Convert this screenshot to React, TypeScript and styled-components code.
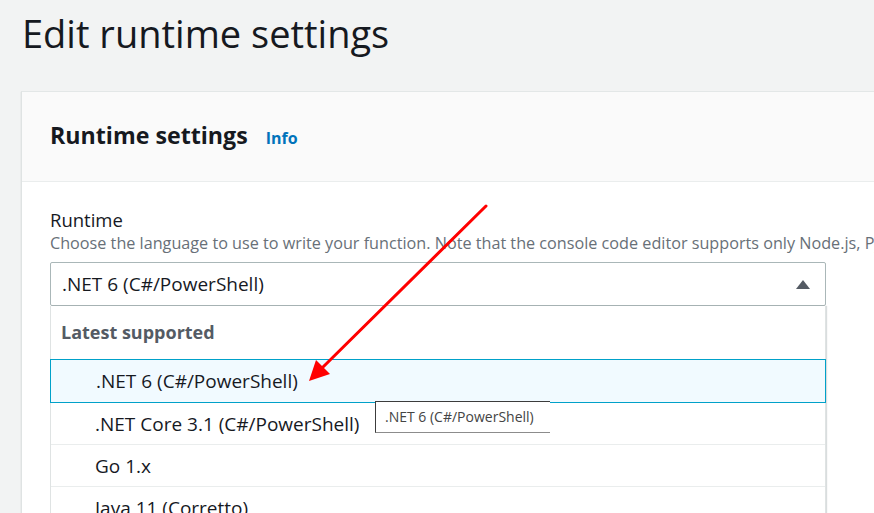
import styled, { createGlobalStyle } from "styled-components";

const GlobalStyle = createGlobalStyle`
  html, body {
    margin: 0;
    padding: 0;
    background: #f2f3f3;
    overflow: hidden;
  }
  body {
    font-family: "Open Sans", "Noto Sans", "Liberation Sans", sans-serif;
    color: #16191f;
  }
`;

const Page = styled.div`
  position: relative;
  width: 874px;
  height: 513px;
  overflow: hidden;
  padding-left: 21px;
  box-sizing: border-box;
`;

const PageTitle = styled.h1`
  margin: 0;
  padding: 10px 0 0 1px;
  height: 91px;
  box-sizing: border-box;
  font-size: 38px;
  font-weight: 400;
  line-height: 46px;
  color: #16191f;
`;

const Card = styled.section`
  width: 900px;
  background: #ffffff;
  border-left: 1px solid #dfe3e3;
  border-top: 1px solid #e3e7e7;
  box-shadow: 0 1px 1px 0 rgba(0, 28, 36, 0.2);
`;

const CardHeader = styled.header`
  display: flex;
  align-items: baseline;
  gap: 18px;
  height: 90px;
  box-sizing: border-box;
  padding: 27px 0 0 28px;
  background: #fafafa;
  border-bottom: 1px solid #eaeded;
`;

const CardTitle = styled.h2`
  margin: 0;
  font-size: 23.2px;
  font-weight: 700;
  line-height: 32px;
  color: #16191f;
`;

const InfoLink = styled.a`
  font-size: 16px;
  font-weight: 700;
  color: #0073bb;
  text-decoration: none;
`;

const CardBody = styled.div`
  padding: 26px 0 0 28px;
`;

const FieldLabel = styled.div`
  font-size: 18.5px;
  line-height: 24px;
  color: #16191f;
`;

const FieldHint = styled.div`
  font-size: 16.2px;
  line-height: 22px;
  color: #687078;
  white-space: nowrap;
  margin-bottom: 8px;
`;

const SelectBox = styled.div`
  width: 776px;
  height: 44px;
  box-sizing: border-box;
  display: flex;
  align-items: center;
  justify-content: space-between;
  padding: 0 15px 0 11px;
  border: 1px solid #aab7b8;
  border-radius: 2px;
  background: #fff;
  font-size: 19px;
  color: #16191f;
`;

const Caret = styled.span`
  width: 0;
  height: 0;
  border-left: 7px solid transparent;
  border-right: 7px solid transparent;
  border-bottom: 9px solid #545b64;
`;

const Dropdown = styled.div`
  width: 776px;
  box-sizing: border-box;
  border: 1px solid #dfe3e3;
  border-top: none;
  background: #fff;
  box-shadow: 1px 0 1px rgba(0, 28, 36, 0.15);
`;

const GroupHeader = styled.div`
  height: 53px;
  box-sizing: border-box;
  padding: 14px 0 0 10px;
  font-size: 18px;
  font-weight: 700;
  color: #545b64;
`;

const Option = styled.div<{ $active?: boolean }>`
  height: ${(p) => (p.$active ? 44 : 42)}px;
  box-sizing: border-box;
  display: flex;
  align-items: center;
  margin: 0 ${(p) => (p.$active ? -1 : 0)}px;
  padding-left: ${(p) => (p.$active ? 45 : 44)}px;
  font-size: 19px;
  color: #16191f;
  background: ${(p) => (p.$active ? "#f1faff" : "#fff")};
  border: ${(p) => (p.$active ? "1px solid #00a1c9" : "none")};
  border-bottom: 1px solid ${(p) => (p.$active ? "#00a1c9" : "#eaeded")};
`;

const Tooltip = styled.div`
  position: absolute;
  left: 375px;
  top: 401px;
  width: 175px;
  height: 32px;
  box-sizing: border-box;
  padding: 5px 0 0 9px;
  background: #fff;
  border-left: 1px solid #3c3c3c;
  border-top: 1px solid #3c3c3c;
  border-bottom: 1px solid #8c8c8c;
  font-family: "Open Sans", "Liberation Sans", sans-serif;
  font-size: 14px;
  color: #444;
  white-space: nowrap;
`;

const ArrowLayer = styled.svg`
  position: absolute;
  left: 0;
  top: 0;
  pointer-events: none;
`;

const options = [
  ".NET 6 (C#/PowerShell)",
  ".NET Core 3.1 (C#/PowerShell)",
  "Go 1.x",
  "Java 11 (Corretto)",
  "Java 8 (Corretto)",
];

export default function App() {
  return (
    <>
      <GlobalStyle />
      <Page>
        <PageTitle>Edit runtime settings</PageTitle>
        <Card>
          <CardHeader>
            <CardTitle>Runtime settings</CardTitle>
            <InfoLink href="#">Info</InfoLink>
          </CardHeader>
          <CardBody>
            <FieldLabel>Runtime</FieldLabel>
            <FieldHint>
              Choose the language to use to write your function. Note that the console code editor supports only
              Node.js, Python, and Ruby.
            </FieldHint>
            <SelectBox>
              <span>.NET 6 (C#/PowerShell)</span>
              <Caret />
            </SelectBox>
            <Dropdown>
              <GroupHeader>Latest supported</GroupHeader>
              {options.map((o, i) => (
                <Option key={o} $active={i === 0}>
                  {o}
                </Option>
              ))}
            </Dropdown>
          </CardBody>
        </Card>
        <Tooltip>.NET 6 (C#/PowerShell)</Tooltip>
        <ArrowLayer width="874" height="513" viewBox="0 0 874 513">
          <line x1="486" y1="206" x2="320" y2="370" stroke="#ff0000" strokeWidth="3" strokeLinecap="round" />
          <polygon points="309,381 316,360 330,374" fill="#ff0000" />
        </ArrowLayer>
      </Page>
    </>
  );
}
